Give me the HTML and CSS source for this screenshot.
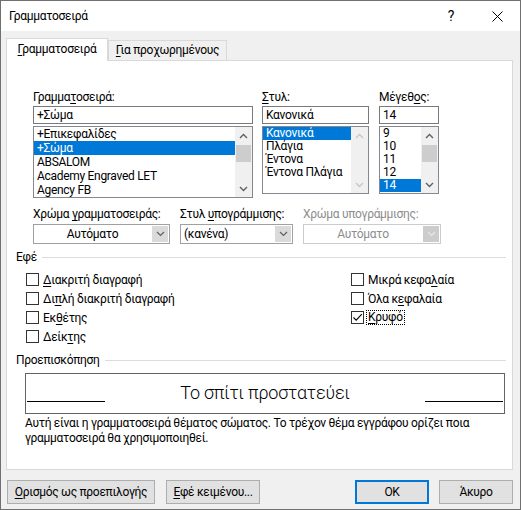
FILE: index.html
```html
<!DOCTYPE html>
<html lang="el">
<head>
    <meta charset="UTF-8">
    <meta name="viewport" content="width=device-width, initial-scale=1.0">
    <title>Γραμματοσειρά</title>
    <link rel="stylesheet" href="styles.css">
</head>
<body>
<div class="dialog">
    <div class="titlebar">
        <span class="title">Γραμματοσειρά</span>
        <span class="caption-btn">?</span>
        <span class="caption-btn">
            <svg width="11" height="11" viewBox="0 0 11 11"><path d="M0.5 0.5 L10.5 10.5 M10.5 0.5 L0.5 10.5" stroke="#000" stroke-width="1" fill="none"/></svg>
        </span>
    </div>

    <div class="content">
        <div class="tabs">
            <div class="tab active"><u>Γ</u>ραμματοσειρά</div>
            <div class="tab"><u>Γ</u>ια προχωρημένους</div>
        </div>

        <div class="panel">
            <!-- font / style / size -->
            <div class="font-row">
                <div class="col col-font">
                    <div class="label">Γραμμα<u>τ</u>οσειρά:</div>
                    <div class="input">+Σώμα</div>
                    <div class="list list-font">
                        <div class="items">
                            <div class="item">+Επικεφαλίδες</div>
                            <div class="item selected">+Σώμα</div>
                            <div class="item">ABSALOM</div>
                            <div class="item">Academy Engraved LET</div>
                            <div class="item">Agency FB</div>
                        </div>
                        <div class="scrollbar">
                            <div class="arrow"><svg width="9" height="6" viewBox="0 0 9 6"><path d="M1 5 L4.5 1.5 L8 5" stroke="#606060" stroke-width="1.4" fill="none"/></svg></div>
                            <div class="track"><div class="thumb"></div></div>
                            <div class="arrow"><svg width="9" height="6" viewBox="0 0 9 6"><path d="M1 1 L4.5 4.5 L8 1" stroke="#606060" stroke-width="1.4" fill="none"/></svg></div>
                        </div>
                    </div>
                </div>

                <div class="col col-style">
                    <div class="label"><u>Σ</u>τυλ:</div>
                    <div class="input">Κανονικά</div>
                    <div class="list list-short">
                        <div class="items small">
                            <div class="item selected">Κανονικά</div>
                            <div class="item">Πλάγια</div>
                            <div class="item">Έντονα</div>
                            <div class="item">Έντονα Πλάγια</div>
                        </div>
                        <div class="scrollbar disabled">
                            <div class="arrow"><svg width="9" height="6" viewBox="0 0 9 6"><path d="M1 5 L4.5 1.5 L8 5" stroke="#c8c8c8" stroke-width="1.4" fill="none"/></svg></div>
                            <div class="track"></div>
                            <div class="arrow"><svg width="9" height="6" viewBox="0 0 9 6"><path d="M1 1 L4.5 4.5 L8 1" stroke="#c8c8c8" stroke-width="1.4" fill="none"/></svg></div>
                        </div>
                    </div>
                </div>

                <div class="col col-size">
                    <div class="label">Μέγεθ<u>ο</u>ς:</div>
                    <div class="input">14</div>
                    <div class="list list-short">
                        <div class="items small">
                            <div class="item">9</div>
                            <div class="item">10</div>
                            <div class="item">11</div>
                            <div class="item">12</div>
                            <div class="item selected">14</div>
                        </div>
                        <div class="scrollbar">
                            <div class="arrow"><svg width="9" height="6" viewBox="0 0 9 6"><path d="M1 5 L4.5 1.5 L8 5" stroke="#606060" stroke-width="1.4" fill="none"/></svg></div>
                            <div class="track"><div class="thumb"></div></div>
                            <div class="arrow"><svg width="9" height="6" viewBox="0 0 9 6"><path d="M1 1 L4.5 4.5 L8 1" stroke="#606060" stroke-width="1.4" fill="none"/></svg></div>
                        </div>
                    </div>
                </div>
            </div>

            <!-- colour / underline -->
            <div class="combo-row">
                <div class="col combo-color">
                    <div class="label">Χρώμα <u>γ</u>ραμματοσειράς:</div>
                    <div class="dropdown">
                        <span class="value center">Αυτόματο</span>
                        <span class="drop-btn"><svg width="9" height="6" viewBox="0 0 9 6"><path d="M1 1 L4.5 4.5 L8 1" stroke="#606060" stroke-width="1.2" fill="none"/></svg></span>
                    </div>
                </div>
                <div class="col combo-underline">
                    <div class="label">Στυλ <u>υ</u>πογράμμισης:</div>
                    <div class="dropdown">
                        <span class="value">(κανένα)</span>
                        <span class="drop-btn"><svg width="9" height="6" viewBox="0 0 9 6"><path d="M1 1 L4.5 4.5 L8 1" stroke="#606060" stroke-width="1.2" fill="none"/></svg></span>
                    </div>
                </div>
                <div class="col combo-ucolor">
                    <div class="label disabled-text">Χρώμα υπογράμμισης:</div>
                    <div class="dropdown disabled">
                        <span class="value center">Αυτόματο</span>
                        <span class="drop-btn"><svg width="9" height="6" viewBox="0 0 9 6"><path d="M1 1 L4.5 4.5 L8 1" stroke="#e8e8e8" stroke-width="1.2" fill="none"/></svg></span>
                    </div>
                </div>
            </div>

            <!-- effects -->
            <div class="group">
                <div class="group-header"><span>Εφέ</span><span class="rule"></span></div>
                <div class="checks">
                    <div class="check-col left">
                        <div class="check"><span class="box"></span><span><u>Δ</u>ιακριτή διαγραφή</span></div>
                        <div class="check"><span class="box"></span><span>Δι<u>π</u>λή διακριτή διαγραφή</span></div>
                        <div class="check"><span class="box"></span><span>Εκ<u>θ</u>έτης</span></div>
                        <div class="check"><span class="box"></span><span>Δείκ<u>τ</u>ης</span></div>
                    </div>
                    <div class="check-col">
                        <div class="check"><span class="box"></span><span>Μικρά κεφα<u>λ</u>αία</span></div>
                        <div class="check"><span class="box"></span><span>Όλα κ<u>ε</u>φαλαία</span></div>
                        <div class="check"><span class="box checked"><svg width="11" height="11" viewBox="0 0 11 11"><path d="M1.5 5.5 L4.2 8.2 L9.8 2.2" stroke="#000" stroke-width="1.1" fill="none"/></svg></span><span class="focused"><u>Κ</u>ρυφό</span></div>
                    </div>
                </div>
            </div>

            <!-- preview -->
            <div class="group preview-group">
                <div class="group-header"><span>Προεπισκόπηση</span><span class="rule"></span></div>
                <div class="preview">
                    <span class="preview-line"></span>
                    <span class="preview-text">Το σπίτι προστατεύει</span>
                    <span class="preview-line"></span>
                </div>
                <p class="note">Αυτή είναι η γραμματοσειρά θέματος σώματος. Το τρέχον θέμα εγγράφου ορίζει ποια<br>γραμματοσειρά θα χρησιμοποιηθεί.</p>
            </div>
        </div>

        <div class="footer">
            <button class="btn btn-default-set"><u>Ο</u>ρισμός ως προεπιλογής</button>
            <button class="btn btn-effects"><u>Ε</u>φέ κειμένου...</button>
            <span class="spacer"></span>
            <button class="btn btn-ok">OK</button>
            <button class="btn btn-cancel">Άκυρο</button>
        </div>
    </div>
</div>
</body>
</html>
```

FILE: styles.css
```css
body {
    margin: 0;
    font-family: Roboto, "Noto Sans", sans-serif;
    font-size: 12px;
    letter-spacing: -0.3px;
    color: #000;
    background-color: #f0f0f0;
}
u {
    text-decoration-thickness: 1px;
    text-underline-offset: 2px;
}
.dialog {
    width: 521px;
    height: 510px;
    box-sizing: border-box;
    border: 1px solid #707070;
    display: flex;
    flex-direction: column;
    background-color: #f0f0f0;
}
.titlebar {
    height: 30px;
    flex: none;
    background-color: #fff;
    display: flex;
    align-items: center;
}
.title {
    flex: 1;
    padding-left: 8px;
}
.caption-btn {
    width: 46px;
    height: 30px;
    display: flex;
    align-items: center;
    justify-content: center;
    font-size: 14px;
}
.content {
    flex: 1;
    display: flex;
    flex-direction: column;
    padding: 7px 7px 0 5px;
}
.tabs {
    display: flex;
    align-items: flex-end;
    height: 22px;
}
.tab {
    box-sizing: border-box;
    height: 20px;
    line-height: 18px;
    text-align: center;
    border: 1px solid #d9d9d9;
    border-bottom: none;
    background-color: #f0f0f0;
    width: 119px;
}
.tab.active {
    width: 102px;
    height: 23px;
    line-height: 21px;
    background-color: #fff;
    margin-bottom: -1px;
    position: relative;
    z-index: 1;
}
.panel {
    flex: none;
    box-sizing: border-box;
    height: 410px;
    background-color: #fff;
    border: 1px solid #d9d9d9;
    padding-top: 29px;
}

/* top lists */
.font-row, .combo-row {
    display: flex;
    margin-left: 26px;
}
.col-font { width: 220px; }
.col-style { width: 107px; margin-left: 9px; }
.col-size { width: 60px; margin-left: 10px; }
.label {
    line-height: 15px;
    height: 15px;
    margin-bottom: 1px;
    white-space: nowrap;
}
.input {
    box-sizing: border-box;
    height: 18px;
    line-height: 16px;
    border: 1px solid #7a7a7a;
    padding-left: 3px;
}
.list {
    box-sizing: border-box;
    margin-top: 2px;
    border: 1px solid #828790;
    display: flex;
    overflow: hidden;
}
.list-font { height: 72px; }
.list-short { height: 68px; }
.items {
    flex: 1;
    min-width: 0;
}
.item {
    height: 14px;
    line-height: 14px;
    padding-left: 3px;
    white-space: nowrap;
}
.items.small .item {
    height: 13px;
    line-height: 13px;
}
.item.selected {
    background-color: #0078d7;
    color: #fff;
}
.scrollbar {
    width: 17px;
    flex: none;
    display: flex;
    flex-direction: column;
    background-color: #f0f0f0;
}
.arrow {
    height: 17px;
    display: flex;
    align-items: center;
    justify-content: center;
}
.track {
    flex: 1;
    padding: 1px 1px 0;
}
.thumb {
    height: 17px;
    background-color: #cdcdcd;
}

/* dropdowns */
.combo-row {
    margin-top: 9px;
}
.combo-color { width: 137px; }
.combo-underline { width: 113px; margin-left: 10px; }
.combo-ucolor { width: 138px; margin-left: 10px; }
.combo-row .label {
    margin-bottom: 2px;
}
.dropdown {
    box-sizing: border-box;
    height: 20px;
    border: 1px solid #a0a0a0;
    display: flex;
    background-color: #fff;
}
.dropdown .value {
    flex: 1;
    line-height: 18px;
    padding-left: 3px;
}
.dropdown .value.center {
    text-align: center;
    padding-left: 0;
}
.drop-btn {
    width: 16px;
    margin: 1px;
    background-color: #dadada;
    display: flex;
    align-items: center;
    justify-content: center;
}
.disabled-text {
    color: #8d8d8d;
}
.dropdown.disabled {
    border-color: #cccccc;
    color: #8d8d8d;
}
.dropdown.disabled .drop-btn {
    background-color: #cccccc;
}

/* groups */
.group {
    margin: 6px 6px 0 9px;
}
.group-header {
    display: flex;
    align-items: center;
    line-height: 15px;
}
.rule {
    flex: 1;
    height: 1px;
    background-color: #dcdcdc;
    margin-left: 5px;
}
.checks {
    display: flex;
    margin: 5px 0 0 10px;
}
.check-col.left {
    width: 325px;
}
.check {
    height: 19px;
    display: flex;
    align-items: center;
}
.box {
    box-sizing: border-box;
    width: 13px;
    height: 13px;
    border: 1px solid #333;
    background-color: #fff;
    margin-right: 4px;
    display: flex;
    align-items: center;
    justify-content: center;
}
.focused {
    outline: 1px dotted #000;
    padding: 0 1px;
    margin-left: -1px;
    line-height: 13px;
}
.preview-group {
    margin-top: 7px;
}
.preview {
    box-sizing: border-box;
    height: 41px;
    margin: 5px 1px 0 9px;
    border: 1px solid #646464;
    display: flex;
    justify-content: space-between;
    align-items: center;
    padding: 0 1px;
}
.preview-line {
    width: 78px;
    height: 1px;
    background-color: #000;
    align-self: flex-end;
    margin-bottom: 11px;
}
.preview-text {
    font-size: 18px;
    font-weight: 300;
    letter-spacing: -0.2px;
    margin-top: -2px;
}
.note {
    margin: 2px 0 0 9px;
    line-height: 15px;
}

/* footer */
.footer {
    display: flex;
    margin-top: 10px;
}
.btn {
    box-sizing: border-box;
    height: 24px;
    font-family: inherit;
    font-size: 12px;
    letter-spacing: -0.3px;
    color: #000;
    background-color: #e1e1e1;
    border: 1px solid #adadad;
    padding: 0;
}
.btn-default-set { width: 148px; margin-left: 1px; }
.btn-effects { width: 94px; margin-left: 11px; }
.spacer { flex: 1; }
.btn-ok {
    width: 74px;
    border: 2px solid #0078d7;
}
.btn-cancel { width: 74px; margin-left: 10px; }
```
